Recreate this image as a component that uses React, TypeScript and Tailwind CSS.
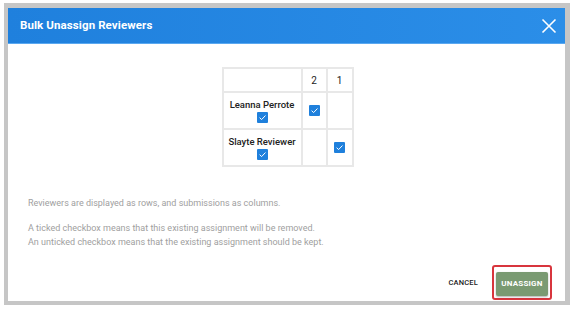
import React from "react";

const Check = () => (
  <span className="inline-flex w-[11px] h-[11px] items-center justify-center bg-[#1f80dc] rounded-[1px]">
    <svg width="9" height="9" viewBox="0 0 10 10" fill="none">
      <path d="M1.8 5.2 L4 7.3 L8.3 2.8" stroke="white" strokeWidth="1.1" />
    </svg>
  </span>
);

const rows = [
  { name: "Leanna Perrote", cols: [true, false] },
  { name: "Slayte Reviewer", cols: [false, true] },
];

export default function App() {
  return (
    <div className="w-[572px] h-[313px] bg-white pt-[3px] pl-[4px] font-['Roboto',sans-serif]">
      <div className="w-[566px] h-[302px] bg-[#c6c6c6] pt-[5px] pl-[4px] pr-[5px] pb-[4px]">
        <div className="w-full h-full bg-white flex flex-col">
          {/* header */}
          <div className="h-[36px] bg-gradient-to-r from-[#1f80dd] to-[#2b8ee8] border-b border-[#5aa8f0] flex items-center justify-between pl-[12px] pr-[8px]">
            <span className="text-white text-[11.5px] font-bold tracking-[0.1px]">
              Bulk Unassign Reviewers
            </span>
            <svg width="16" height="16" viewBox="0 0 16 16" fill="none">
              <path d="M1.5 1.5 L14.5 14.5 M14.5 1.5 L1.5 14.5" stroke="white" strokeWidth="1.6" />
            </svg>
          </div>

          {/* matrix */}
          <div className="flex justify-center pt-[23px] pl-[2px]">
            <table className="border-collapse text-[9.5px] text-[#222]">
              <thead>
                <tr className="h-[24px]">
                  <th className="w-[79px] border-2 border-[#e8e8e8]" />
                  <th className="w-[25px] border-2 border-[#e8e8e8] font-normal text-[10px]">2</th>
                  <th className="w-[26px] border-2 border-[#e8e8e8] font-normal text-[10px]">1</th>
                </tr>
              </thead>
              <tbody>
                {rows.map((r) => (
                  <tr key={r.name} className="h-[37px]">
                    <td className="border-2 border-[#e8e8e8] text-center leading-[12px] font-medium">
                      <div>{r.name}</div>
                      <div className="flex justify-center mt-[1px]">
                        <Check />
                      </div>
                    </td>
                    {r.cols.map((c, i) => (
                      <td key={i} className="border-2 border-[#e8e8e8] text-center">
                        {c && (
                          <div className="flex justify-center">
                            <Check />
                          </div>
                        )}
                      </td>
                    ))}
                  </tr>
                ))}
              </tbody>
            </table>
          </div>

          {/* info */}
          <div className="px-[20px] mt-[29px] text-[9px] leading-[14px] text-[#a0a0a0]">
            <p>Reviewers are displayed as rows, and submissions as columns.</p>
            <p className="mt-[11px]">A ticked checkbox means that this existing assignment will be removed.</p>
            <p>An unticked checkbox means that the existing assignment should be kept.</p>
          </div>

          {/* footer */}
          <div className="mt-auto mb-[1px] flex items-center justify-end pr-[13px] gap-[14px]">
            <button className="text-[7.5px] font-medium text-[#222] tracking-[0.2px]">CANCEL</button>
            <div className="border-2 border-[#d8353d] rounded-[3px] p-[2px]">
              <button className="h-[24px] w-[52px] bg-[#7a9a72] text-white text-[8px] font-bold rounded-[2px] shadow-[0_1px_2px_rgba(0,0,0,0.3)] tracking-[0.2px]">
                UNASSIGN
              </button>
            </div>
          </div>
        </div>
      </div>
    </div>
  );
}
